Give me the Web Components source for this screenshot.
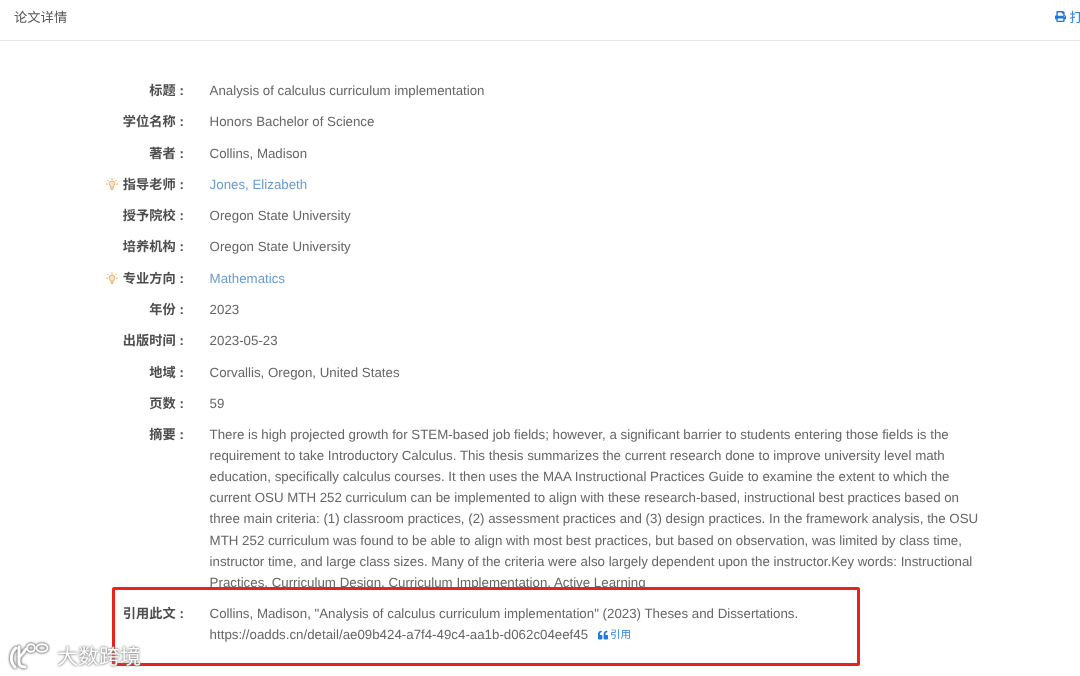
<!DOCTYPE html>
<html lang="zh-CN">
<head>
<meta charset="utf-8">
<title>论文详情</title>
<style>
  html, body { margin: 0; height: 100%; background: #fff; overflow: hidden; }
  body { font-family: "Liberation Sans", "Noto Sans CJK SC", sans-serif; text-rendering: geometricPrecision; }
</style>
</head>
<body>
<paper-page>
  <paper-header slot="header" title-text="论文详情" action="打印"></paper-header>
  <paper-row label="标题">Analysis of calculus curriculum implementation</paper-row>
  <paper-row label="学位名称">Honors Bachelor of Science</paper-row>
  <paper-row label="著者">Collins, Madison</paper-row>
  <paper-row label="指导老师" tip><a href="#">Jones, Elizabeth</a></paper-row>
  <paper-row label="授予院校">Oregon State University</paper-row>
  <paper-row label="培养机构">Oregon State University</paper-row>
  <paper-row label="专业方向" tip><a href="#">Mathematics</a></paper-row>
  <paper-row label="年份">2023</paper-row>
  <paper-row label="出版时间">2023-05-23</paper-row>
  <paper-row label="地域">Corvallis, Oregon, United States</paper-row>
  <paper-row label="页数">59</paper-row>
  <paper-row label="摘要">There is high projected growth for STEM-based job fields; however, a significant barrier to students entering those fields is the requirement to take Introductory Calculus. This thesis summarizes the current research done to improve university level math education, specifically calculus courses. It then uses the MAA Instructional Practices Guide to examine the extent to which the current OSU MTH 252 curriculum can be implemented to align with these research-based, instructional best practices based on three main criteria: (1) classroom practices, (2) assessment practices and (3) design practices. In the framework analysis, the OSU MTH 252 curriculum was found to be able to align with most best practices, but based on observation, was limited by class time, instructor time, and large class sizes. Many of the criteria were also largely dependent upon the instructor.Key words: Instructional Practices, Curriculum Design, Curriculum Implementation, Active Learning</paper-row>
  <paper-row label="引用此文">Collins, Madison, "Analysis of calculus curriculum implementation" (2023) Theses and Dissertations.<br>https://oadds.cn/detail/ae09b424-a7f4-49c4-aa1b-d062c04eef45<cite-tag>引用</cite-tag></paper-row>
  <red-box slot="over"></red-box>
  <brand-mark slot="over">大数跨境</brand-mark>
</paper-page>

<script>
class PaperPage extends HTMLElement {
  constructor() {
    super();
    this.attachShadow({ mode: 'open' })
    this.shadowRoot.innerHTML = `
      <style>
        /* the reference is a soft, rescaled capture */
        :host { display: block; position: relative; width: 1080px; height: 676px; overflow: hidden; filter: blur(.3px); }
        main { display: flex; flex-direction: column; padding-top: 39px; }
      </style>
      <slot name="header"></slot>
      <main><slot></slot></main>
      <slot name="over"></slot>
    `
  }
}

class PaperHeader extends HTMLElement {
  constructor() {
    super();
    this.attachShadow({ mode: 'open' })
    this.shadowRoot.innerHTML = `
      <style>
        :host { display: flex; justify-content: space-between; align-items: center; height: 40px; padding-left: 14px; border-bottom: 1px solid #e6e9ec; font-size: 13.3px; color: #555; overflow: hidden; }
        .title { margin-top: -7px; }
        .action { display: flex; align-items: center; gap: 3px; margin-top: -7px; margin-right: -16px; color: #2a7fe0; }
        svg { width: 11px; height: 11px; fill: #1f78e0; }
      </style>
      <span class="title">${this.getAttribute('title-text')}</span>
      <span class="action">
        <svg viewBox="0 0 512 512"><path d="M448 192V77.25c0-8.49-3.37-16.62-9.37-22.63L393.37 9.37c-6-6-14.14-9.37-22.63-9.37H96C78.33 0 64 14.33 64 32v160c-35.35 0-64 28.65-64 64v112c0 8.84 7.16 16 16 16h48v96c0 17.67 14.33 32 32 32h320c17.67 0 32-14.33 32-32v-96h48c8.84 0 16-7.16 16-16V256c0-35.35-28.65-64-64-64zm-64 256H128v-96h256v96zm0-224H128V64h192v48c0 8.84 7.16 16 16 16h48v96zm48 72c-13.25 0-24-10.75-24-24 0-13.26 10.75-24 24-24s24 10.74 24 24c0 13.25-10.75 24-24 24z"/></svg>
        ${this.getAttribute('action')}
      </span>
    `
  }
}

class PaperRow extends HTMLElement {
  constructor() {
    super();
    this.attachShadow({ mode: 'open' })
    const tip = this.hasAttribute('tip') ? `
      <svg class="tip" viewBox="0 0 14 14" fill="none" stroke="#eda65a" stroke-width="1.1" stroke-linecap="round">
        <path d="M7 .6v1.3M1.7 2.4l.9.9M12.3 2.4l-.9.9M.4 7.1h1.3M12.3 7.1h1.3"/>
        <path d="M5.4 10.3c0-1.2-1.6-1.7-1.6-3.6a3.2 3.2 0 0 1 6.4 0c0 1.9-1.6 2.4-1.6 3.6z" fill="#fbe6cc"/>
        <path d="M5.6 11.9h2.8M6.2 13.3h1.6"/>
      </svg>` : ''
    this.shadowRoot.innerHTML = `
      <style>
        :host { display: grid; grid-template-columns: 184px 770px; column-gap: 25.6px; margin-bottom: 10.2px; font-size: 13.3px; line-height: 21.1px; color: #666; }
        .label { display: flex; justify-content: flex-end; align-items: center; height: 21.1px; gap: 4px; color: #4d4d4d; font-weight: bold; font-size: 13.2px; }
        .tip { width: 12px; height: 12px; margin-right: 1px; }
        ::slotted(a) { color: #6b9bd2; text-decoration: none; }
      </style>
      <div class="label">${tip}<span>${this.getAttribute('label')}</span><span>:</span></div>
      <div class="value"><slot></slot></div>
    `
  }
}

class CiteTag extends HTMLElement {
  constructor() {
    super();
    this.attachShadow({ mode: 'open' })
    this.shadowRoot.innerHTML = `
      <style>
        :host { display: inline-flex; align-items: center; gap: 2px; margin-left: 10px; font-size: 10.5px; color: #2a7fe0; vertical-align: -1px; }
        svg { width: 10px; height: 10px; fill: #1f78e0; }
      </style>
      <svg viewBox="0 0 512 512"><path d="M464 256h-80v-64c0-35.3 28.7-64 64-64h8c13.3 0 24-10.7 24-24V56c0-13.3-10.7-24-24-24h-8c-88.4 0-160 71.6-160 160v240c0 26.5 21.5 48 48 48h128c26.5 0 48-21.5 48-48V304c0-26.5-21.5-48-48-48zm-288 0H96v-64c0-35.3 28.7-64 64-64h8c13.3 0 24-10.7 24-24V56c0-13.3-10.7-24-24-24h-8C71.6 32 0 103.6 0 192v240c0 26.5 21.5 48 48 48h128c26.5 0 48-21.5 48-48V304c0-26.5-21.5-48-48-48z"/></svg>
      <slot></slot>
    `
  }
}

// annotation drawn over the page, so it sits at fixed coordinates
class RedBox extends HTMLElement {
  constructor() {
    super();
    this.attachShadow({ mode: 'open' })
    this.shadowRoot.innerHTML = `
      <style>
        :host { position: absolute; left: 112px; top: 587px; width: 742px; height: 73px; border: 3px solid #e8231c; border-radius: 2px; }
      </style>
    `
  }
}

class BrandMark extends HTMLElement {
  constructor() {
    super();
    this.attachShadow({ mode: 'open' })
    this.shadowRoot.innerHTML = `
      <style>
        :host { position: absolute; left: 9px; top: 641px; display: flex; align-items: center; gap: 7px; color: #fff; font-size: 21px; line-height: 30px; text-shadow: 0 0 2px #777, 0 0 3px #999; font-family: "Noto Sans CJK SC", sans-serif; }
        svg { width: 41px; height: 28px; fill: none; stroke: #fff; stroke-width: 3; stroke-linecap: round; filter: drop-shadow(0 0 1px #666) drop-shadow(0 0 1px #999); }
      </style>
      <svg viewBox="0 0 41 28">
        <path d="M7 6C1 11 1 20 6 25"/>
        <path d="M10 5v15c0 3 2 5 6 5"/>
        <path d="M10 15c3-2 5-5 7-8"/>
        <circle cx="22" cy="6" r="3.8" stroke-width="2"/>
        <ellipse cx="33" cy="6" rx="5.5" ry="3.8" stroke-width="2"/>
      </svg>
      <span><slot></slot></span>
    `
  }
}

customElements.define('paper-page', PaperPage)
customElements.define('paper-header', PaperHeader)
customElements.define('paper-row', PaperRow)
customElements.define('cite-tag', CiteTag)
customElements.define('red-box', RedBox)
customElements.define('brand-mark', BrandMark)
</script>
</body>
</html>
